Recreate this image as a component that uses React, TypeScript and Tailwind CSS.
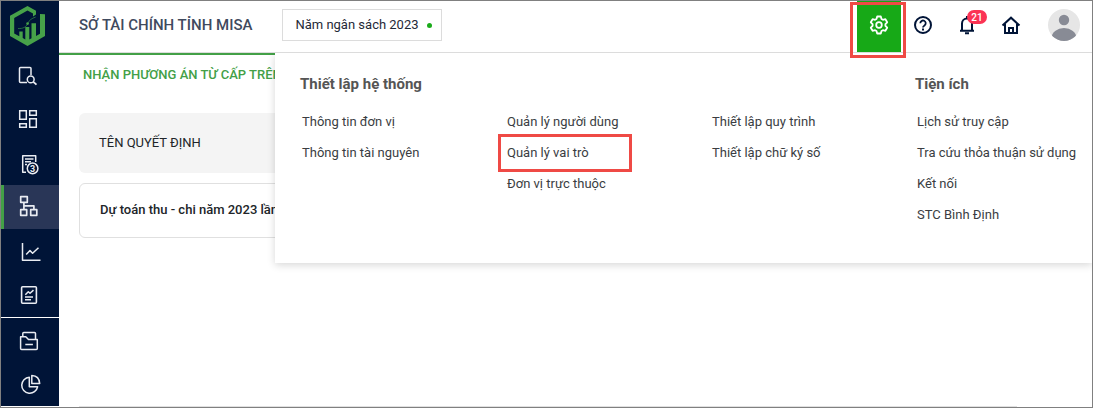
import React, { useState } from 'react'

const mainNav = [
  { id: 'lookup', label: 'Tra cứu', icon: <LookupIcon /> },
  { id: 'overview', label: 'Tổng quan', icon: <OverviewIcon /> },
  { id: 'estimate', label: 'Dự toán', icon: <EstimateIcon /> },
  { id: 'allocation', label: 'Phân bổ', icon: <AllocationIcon /> },
  { id: 'trend', label: 'Phân tích', icon: <TrendIcon /> },
  { id: 'report', label: 'Báo cáo', icon: <ReportIcon /> },
]

const extraNav = [
  { id: 'archive', label: 'Lưu trữ', icon: <ArchiveIcon /> },
  { id: 'stats', label: 'Thống kê', icon: <StatsIcon /> },
]

const menuColumns = [
  { title: 'Thiết lập hệ thống', items: ['Thông tin đơn vị', 'Thông tin tài nguyên'] },
  { title: '', items: ['Quản lý người dùng', 'Quản lý vai trò', 'Đơn vị trực thuộc'] },
  { title: '', items: ['Thiết lập quy trình', 'Thiết lập chữ ký số'] },
  { title: 'Tiện ích', items: ['Lịch sử truy cập', 'Tra cứu thỏa thuận sử dụng', 'Kết nối', 'STC Bình Định'] },
]

const highlighted = 'Quản lý vai trò'

function NavSvg({ children }: { children: React.ReactNode }) {
  return (
    <svg width="24" height="24" viewBox="0 0 24 24" fill="none" stroke="#e9ecf2" strokeWidth="1.5" strokeLinejoin="round" aria-hidden="true">
      {children}
    </svg>
  )
}

function LookupIcon() {
  return (
    <NavSvg>
      <path d="M10 19.5H3.5a1 1 0 0 1-1-1V5.500a1 1 0 0 1 1-1H13a1 1 0 0 1 1 1V12" />
      <circle cx="13.7" cy="16.4" r="3.4" />
      <path d="M16.3 18.800l3.200 2.900" strokeWidth="1.8" />
    </NavSvg>
  )
}

function OverviewIcon() {
  return (
    <NavSvg>
      <path d="M2.700 3.700h6.600v8.600H2.700zM2.700 16.700h6.600v3.600H2.700zM12.700 3.700h6.600v4.600h-6.600zM12.700 11.700h6.600v8.600h-6.600z" strokeLinejoin="miter" />
    </NavSvg>
  )
}

function EstimateIcon() {
  return (
    <NavSvg>
      <path d="M9 21.300H5.700V4.800h13V11M8 8h8.500M8 10.800h6M8 13.500h2" />
      <circle cx="15.6" cy="17.4" r="5.3" />
      <text x="15.6" y="20.6" textAnchor="middle" fontSize="9" fontWeight="700" fill="#e9ecf2" stroke="none">3</text>
    </NavSvg>
  )
}

function AllocationIcon() {
  return (
    <NavSvg>
      <path d="M3.700 1.700h6.600v5.600H3.700zM3.700 14.700h6v5.600h-6zM13.700 14.700h6.100v5.600h-6.100zM6.900 7.300v7.400M6.900 10.800h10v3.900" strokeWidth="1.7" />
    </NavSvg>
  )
}

function TrendIcon() {
  return (
    <NavSvg>
      <path d="M5.500 4v17.300h18M9.200 15.500l3.800-3.900 2.600 2.600 5.900-5.500" />
    </NavSvg>
  )
}

function ReportIcon() {
  return (
    <NavSvg>
      <rect x="4.6" y="3.7" width="14.8" height="16.6" rx="1" strokeWidth="1.6" />
      <path d="M8.300 11.800l3-3 1.700 1.500 3.500-3.200M8 14h8M8 16.700h6" />
    </NavSvg>
  )
}

function ArchiveIcon() {
  return (
    <NavSvg>
      <path d="M3.600 8.700h5.200l2.700 2.800h8.800v8.900a1 1 0 0 1-1 1H4.600a1 1 0 0 1-1-1zM5.800 8.400V5.600a1 1 0 0 1 1-1h10.700a1 1 0 0 1 1 1v5.700M8.300 16.600h7.600" />
    </NavSvg>
  )
}

function StatsIcon() {
  return (
    <NavSvg>
      <path d="M12.300 5.300a8 8 0 1 0 8.300 9.500h-8.300z" />
      <path d="M14.800 3.600c4.600.2 7.600 3.300 7.900 8h-7.900z" />
    </NavSvg>
  )
}

function Logo() {
  return (
    <svg width="35" height="40" viewBox="0 0 35 40" aria-hidden="true">
      <path
        d="M26 4.700L17.500 0 0 9.800v20.300L17.500 40 35 30.100V8.300L30 8v19.800L26 30V17.300h-4.500v15l-2.200 1.200V21h-4v12.500l-2.600-1.400v-6.600H9.300v4.700L4.200 27.500V12L17.500 4.400 23 7.500v3l3-2z"
        fill="#47a249"
      />
      <path d="M8 22.500c5 .3 8-1.300 9.700-5s4-5 8-6.500" fill="none" stroke="#2f7d45" strokeWidth="0.8" />
      <circle cx="17.600" cy="17.600" r="1.300" fill="#47a249" />
    </svg>
  )
}

function GearIcon() {
  return (
    <svg width="20" height="20" viewBox="0 0 20 20" fill="none" stroke="#fff" strokeWidth="1.8" strokeLinejoin="round" aria-hidden="true">
      <path d="M8.200 1.500h3.600l.7 2.500 1.400.8 2.500-.6 1.800 3.100-1.800 1.900v1.600l1.800 1.900-1.800 3.100-2.500-.6-1.400.8-.7 2.500H8.200L7.500 16l-1.400-.8-2.500.6-1.800-3.100 1.800-1.900V9.200L1.800 7.300l1.800-3.100 2.500.6L7.500 4z" />
      <circle cx="10" cy="10" r="2.8" />
    </svg>
  )
}

function HelpIcon() {
  return (
    <svg width="20" height="20" viewBox="0 0 20 20" fill="none" stroke="#001437" strokeWidth="2" aria-hidden="true">
      <circle cx="10" cy="10" r="8" />
      <path d="M7.300 8.200a2.700 2.700 0 1 1 4.400 2.100c-1 .8-1.700 1.200-1.700 2.200" strokeWidth="1.8" />
      <path d="M10 13.600v1.800" />
    </svg>
  )
}

function BellIcon() {
  return (
    <svg width="20" height="20" viewBox="0 0 20 20" fill="none" stroke="#001437" strokeWidth="2" aria-hidden="true">
      <path d="M3 15.800h14M5 15.800V8.500a5 5 0 0 1 10 0v7.300" />
      <path d="M8 18.200h4M10 1v2.500" />
    </svg>
  )
}

function HomeIcon() {
  return (
    <svg width="20" height="20" viewBox="0 0 20 20" fill="none" stroke="#001437" strokeWidth="2" aria-hidden="true">
      <path d="M1.500 10.600L10 2.700l8.500 7.900M4 9v9h12V9M8 18v-5h4v5" />
    </svg>
  )
}

function Avatar() {
  return (
    <svg width="32" height="32" viewBox="0 0 32 32" aria-hidden="true">
      <clipPath id="avatar">
        <circle cx="16" cy="16" r="16" />
      </clipPath>
      <g clipPath="url(#avatar)">
        <path d="M0 0h32v32H0z" fill="#e6e6e6" />
        <circle cx="16" cy="11" r="5.2" fill="#888b95" />
        <ellipse cx="16" cy="29" rx="12.5" ry="10" fill="#888b95" />
      </g>
    </svg>
  )
}

function Sidebar() {
  const [active, setActive] = useState('allocation')

  const renderItem = (item: { id: string; label: string; icon: React.ReactNode }) => (
    <button
      key={item.id}
      aria-label={item.label}
      onClick={() => setActive(item.id)}
      className={`flex h-11 w-full items-center border-l-3 pl-[13px] ${active === item.id ? 'border-[#43a047] bg-[#293657]' : 'border-transparent'}`}
    >
      {item.icon}
    </button>
  )

  return (
    <aside className="mb-px w-[58px] shrink-0 bg-[#001437]">
      <div className="flex h-[52px] items-center pb-[3px] pl-[9px]">
        <Logo />
      </div>
      <nav>
        {mainNav.map(renderItem)}
        <div className="h-px bg-white" />
        {extraNav.map(renderItem)}
      </nav>
    </aside>
  )
}

function Header({ menuOpen, onToggle }: { menuOpen: boolean; onToggle: () => void }) {
  return (
    <header className="flex h-[52px] border-b border-[#dcdcdc] pr-3 pl-5">
      <div className="flex items-center pb-[3px]">
        <h1 className="text-[15px] font-medium whitespace-nowrap text-[#3f4a5e]">SỞ TÀI CHÍNH TỈNH MISA</h1>
        <button className="ml-[30px] flex h-8 w-40 items-center gap-2 border border-[#dcdcdc] px-3 text-[13px] whitespace-nowrap text-[#1f2937]">
          Năm ngân sách 2023
          <span className="size-[5px] shrink-0 rounded-full bg-[#1aab1a]" />
        </button>
      </div>

      <div className="ml-auto flex">
        <button
          aria-label="Thiết lập"
          aria-expanded={menuOpen}
          onClick={onToggle}
          className="relative z-20 flex w-11 items-center justify-center bg-[#17a917] pb-[3px]"
        >
          <GearIcon />
          <span className="absolute top-px -right-[5px] -bottom-[6px] -left-[7px] border-3 border-[#ef4a45]" />
        </button>
        <div className="flex items-center pb-[3px]">
          <button aria-label="Trợ giúp" className="flex w-11 items-center justify-center">
            <HelpIcon />
          </button>
          <button aria-label="Thông báo" className="relative flex w-11 items-center justify-center">
            <BellIcon />
            <span className="absolute -top-[5px] right-0.5 flex h-[14px] w-5 items-center justify-center rounded-full bg-[#fb3354] text-[10px] font-medium text-white">21</span>
          </button>
          <button aria-label="Trang chủ" className="flex w-11 items-center justify-center">
            <HomeIcon />
          </button>
          <button aria-label="Tài khoản" className="ml-[15px]">
            <Avatar />
          </button>
        </div>
      </div>
    </header>
  )
}

function SettingsMenu() {
  return (
    <div className="absolute top-0 right-0 left-[216px] z-10 grid h-[210px] grid-cols-[205fr_205fr_205fr_177fr] bg-white pt-5 pl-[25px] shadow-[0_2px_8px_rgba(0,0,0,0.16)]">
      {menuColumns.map((col, i) => (
        <div key={i}>
          <h2 className="mb-4 h-[22px] text-[15px] leading-[22px] font-bold whitespace-nowrap text-[#555]">{col.title}</h2>
          <ul className="pl-[2px]">
            {col.items.map(item => (
              <li key={item} className="relative h-[31px] text-[13px] leading-[22px] whitespace-nowrap text-[#3a3d42]">
                <a href="#">{item}</a>
                {item === highlighted && (
                  <span className="pointer-events-none absolute -top-2 -left-[9px] h-[38px] w-[134px] border-3 border-[#ef4a45]" />
                )}
              </li>
            ))}
          </ul>
        </div>
      ))}
    </div>
  )
}

export default function App() {
  const [menuOpen, setMenuOpen] = useState(true)

  return (
    <div className="flex min-h-screen border border-[#808080] bg-white font-[Roboto,sans-serif]">
      <Sidebar />

      <div className="flex min-w-0 flex-1 flex-col">
        <Header menuOpen={menuOpen} onToggle={() => setMenuOpen(!menuOpen)} />

        <main className="relative flex flex-1 flex-col overflow-hidden">
          <div className="h-[50px] border-t-2 border-[#43a047] pl-6">
            <a href="#" className="text-[13px] leading-10 font-medium whitespace-nowrap text-[#43a047]">
              NHẬN PHƯƠNG ÁN TỪ CẤP TRÊN
            </a>
          </div>

          <div className="px-5">
            <table className="w-full border-separate border-spacing-x-0 border-spacing-y-[10px] text-left text-[13px] text-[#212529]">
              <thead>
                <tr className="h-[60px]">
                  <th className="rounded-md bg-[#f4f4f4] px-5 font-normal">TÊN QUYẾT ĐỊNH</th>
                </tr>
              </thead>
              <tbody>
                <tr className="h-[55px]">
                  <td className="rounded-md border border-[#e0e0e0] px-5 pb-0.5 font-medium">Dự toán thu - chi năm 2023 lần 1</td>
                </tr>
              </tbody>
            </table>
          </div>

          <div className="mt-auto mr-[75px] ml-5 h-px bg-[#e0e0e0]" />

          {menuOpen && <SettingsMenu />}
        </main>
      </div>
    </div>
  )
}
